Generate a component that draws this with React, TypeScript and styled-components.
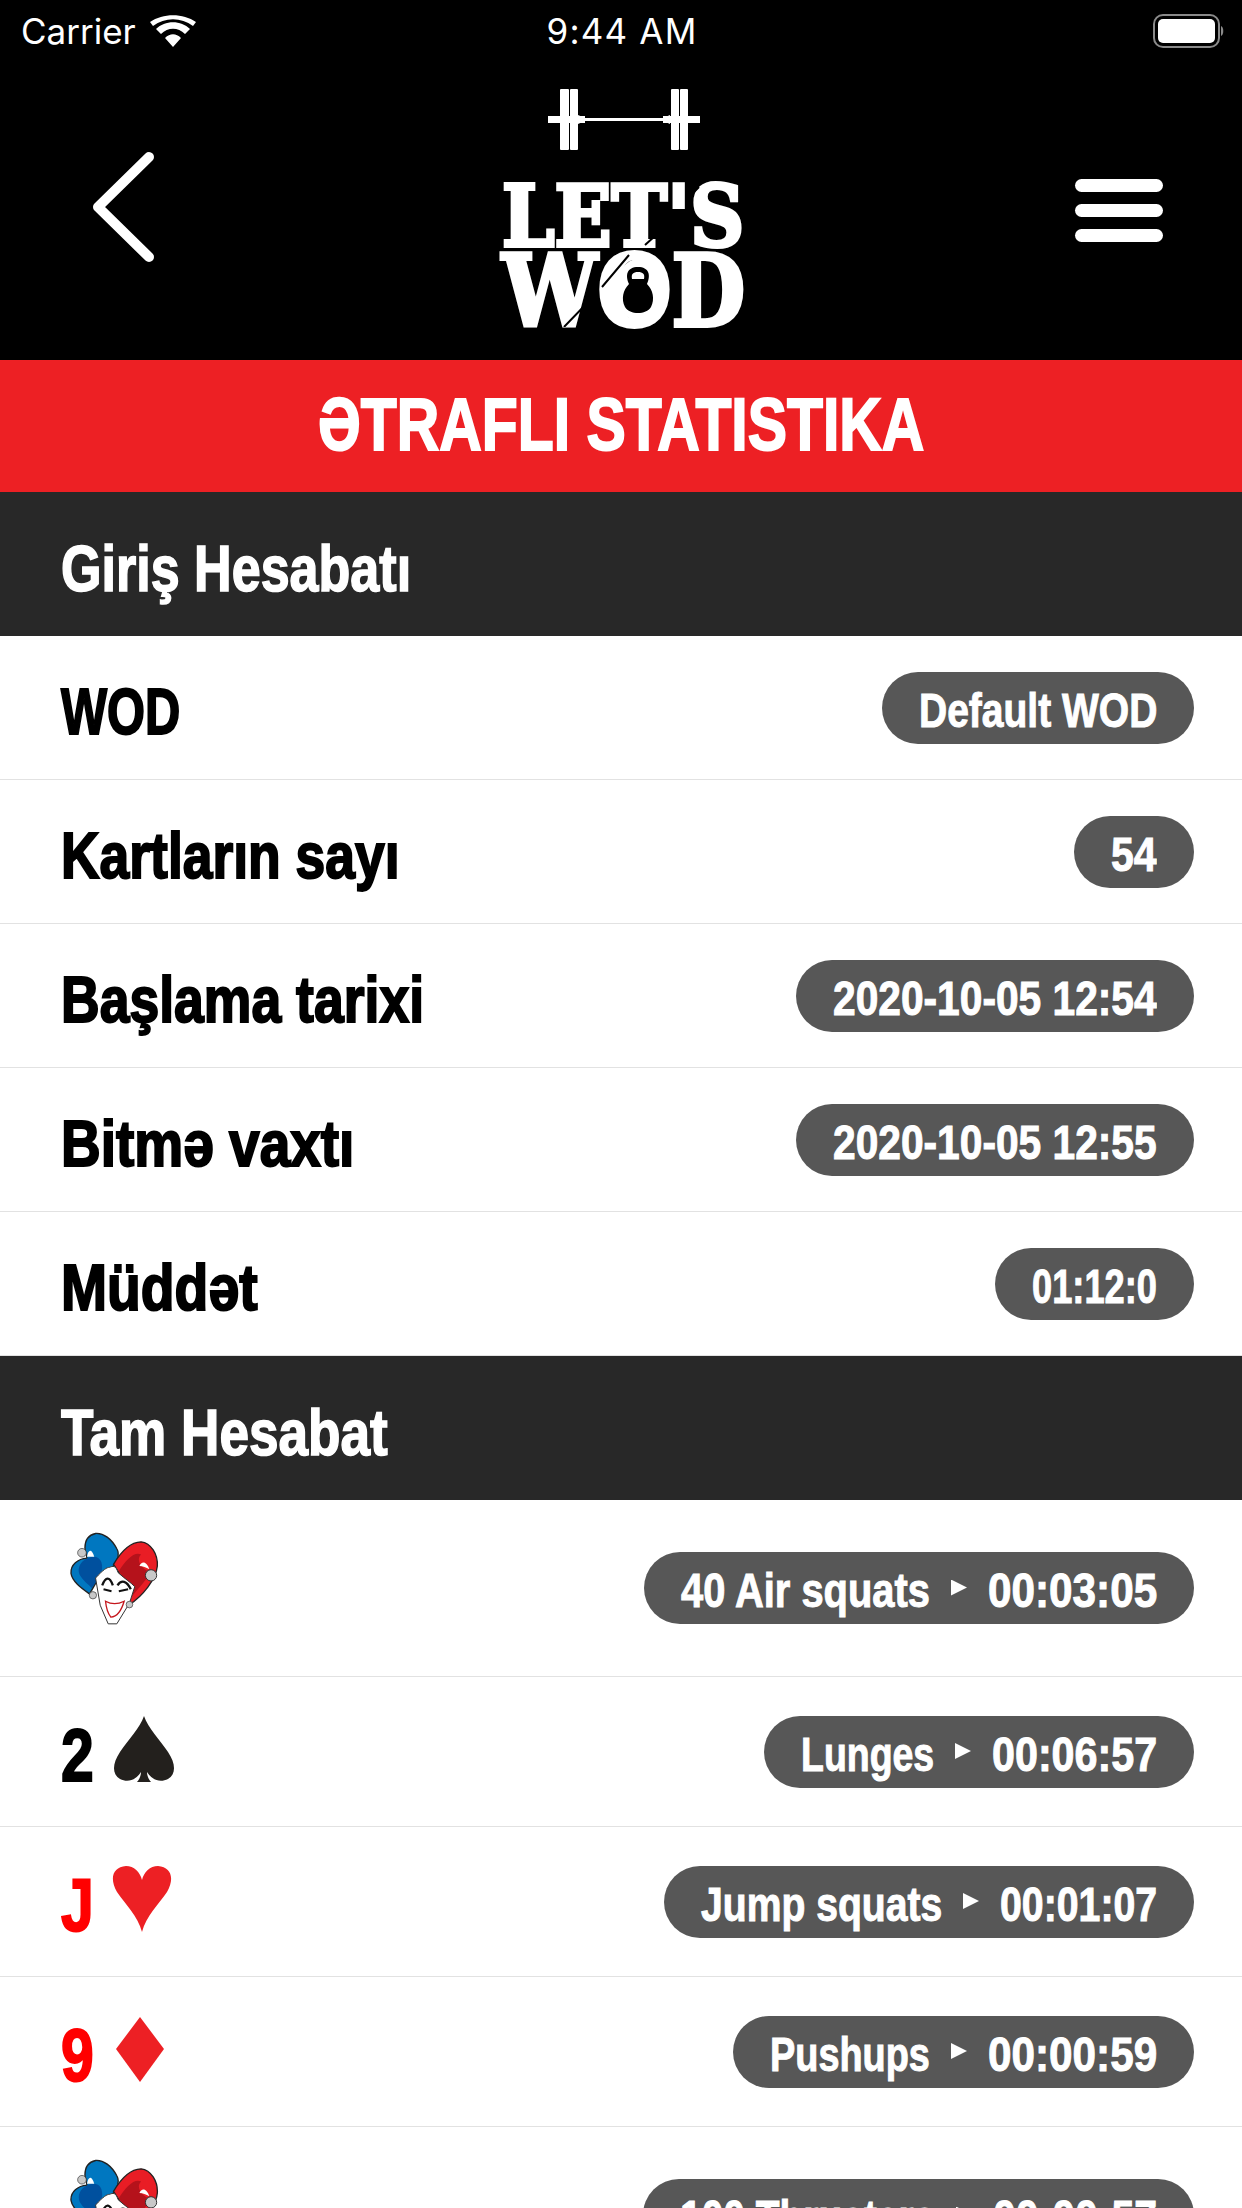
import * as React from 'react';
import styled, { createGlobalStyle } from 'styled-components';

const GlobalStyle = createGlobalStyle`
  html, body {
    margin: 0;
    padding: 0;
    background: #fff;
  }
  body {
    font-family: "Liberation Sans", Arial, sans-serif;
  }
`;

const Page = styled.div`
  width: 1242px;
  height: 2208px;
  overflow: hidden;
  background: #fff;
`;

const Header = styled.header`
  height: 360px;
  background: #000;
  color: #fff;
  display: flex;
  flex-direction: column;
`;

const StatusBar = styled.div`
  height: 62px;
  padding: 0 17px 0 21px;
  display: grid;
  grid-template-columns: 1fr auto 1fr;
  align-items: center;
  font-family: Inter, "Liberation Sans", sans-serif;
  font-size: 35px;
`;

const StatusLeft = styled.div`
  display: flex;
  align-items: center;
  gap: 14px;
`;

const StatusRight = styled.div`
  display: flex;
  justify-content: flex-end;
`;

const Clock = styled.span`
  letter-spacing: 1.2px;
  margin-right: 2px;
`;

const Nav = styled.div`
  flex: 1;
  display: grid;
  grid-template-columns: 1fr auto 1fr;
  align-items: start;
  padding: 0 79px 0 90px;
`;

const BackButton = styled.svg`
  width: 66px;
  height: 114px;
  margin-top: 88px;
`;

const Burger = styled.div`
  width: 88px;
  margin-top: 117px;
  justify-self: end;
  display: flex;
  flex-direction: column;
  gap: 12px;
`;

const BurgerBar = styled.span`
  height: 13px;
  border-radius: 7px;
  background: #fff;
`;

const Logo = styled.div`
  width: 244px;
  margin-top: 27px;
  margin-left: -6px;
  display: flex;
  flex-direction: column;
  align-items: center;
`;

const Lettering = styled.div`
  position: relative;
  width: 244px;
  margin-top: 34px;
  display: flex;
  flex-direction: column;
  gap: 8px;
`;

const LogoLine = styled.div<{ $size: number; $cap: number }>`
  position: relative;
  height: ${(p) => p.$cap}px;
  font-family: "DejaVu Serif", serif;
  font-weight: 700;
  font-size: ${(p) => p.$size}px;
  line-height: ${(p) => p.$cap}px;
  -webkit-text-stroke: 4px #fff;
`;

const Kettlebell = styled.svg`
  position: absolute;
  left: 113px;
  top: 4px;
  width: 46px;
  height: 62px;
`;

const Slashes = styled.svg`
  position: absolute;
  left: 0;
  top: 0;
  width: 244px;
  height: 142px;
`;

const TitleBar = styled.h1`
  margin: 0;
  height: 132px;
  box-sizing: border-box;
  padding-bottom: 5px;
  background: #ed2024;
  color: #fff;
  display: flex;
  align-items: center;
  justify-content: center;
  font-size: 75px;
  font-weight: 700;
  -webkit-text-stroke: 2px #fff;
`;

const SectionBar = styled.h2`
  margin: 0;
  height: 144px;
  box-sizing: border-box;
  padding: 8px 0 0 61px;
  background: #282828;
  color: #fff;
  display: flex;
  align-items: center;
  font-size: 65px;
  font-weight: 700;
  -webkit-text-stroke: 1.6px #fff;
`;

const Row = styled.div<{ $height: number }>`
  height: ${(p) => p.$height}px;
  box-sizing: border-box;
  padding: 0 48px 0 61px;
  border-bottom: 1px solid #e2e2e2;
  display: flex;
  align-items: center;
  justify-content: space-between;
`;

const Label = styled.span`
  padding-top: 8px;
  color: #000;
  font-size: 64px;
  font-weight: 700;
  -webkit-text-stroke: 2px #000;
`;

const Pill = styled.div`
  height: 72px;
  box-sizing: border-box;
  padding: 4px 37px 0;
  border-radius: 36px;
  background: #575757;
  color: #fff;
  display: flex;
  align-items: center;
  gap: 21px;
  font-size: 49px;
  font-weight: 700;
  -webkit-text-stroke: 1px #fff;
`;

const Arrow = styled.span`
  width: 16px;
  height: 16px;
  margin-bottom: 5px;
  background: #fff;
  clip-path: polygon(0 0, 100% 50%, 0 100%);
`;

const Card = styled.div`
  display: flex;
  align-items: center;
  gap: 18px;
`;

const CardRank = styled.span<{ $red: boolean }>`
  padding-top: 6px;
  color: ${(p) => (p.$red ? '#ff0000' : '#000')};
  font-size: 75px;
  font-weight: 700;
  -webkit-text-stroke: 2px ${(p) => (p.$red ? '#ff0000' : '#000')};
`;

const SuitIcon = styled.svg`
  width: 64px;
  height: 68px;
  margin-bottom: 4px;
`;

const JokerIcon = styled.svg`
  width: 93px;
  height: 95px;
  margin: 0 0 19px 7px;
`;

const FitBox = styled.span<{ $width: number }>`
  display: block;
  width: ${(p) => p.$width}px;
  white-space: nowrap;
`;

const FitInner = styled.span`
  display: inline-block;
  transform-origin: left center;
`;

// the reference font is far narrower than anything installed, so squeeze each text to its measured width
const FitText = ({ width, children }: { width: number; children: React.ReactNode }) => {
  const ref = React.useRef<HTMLSpanElement>(null);
  const [scale, setScale] = React.useState(1);
  React.useLayoutEffect(() => {
    if (ref.current) setScale(width / ref.current.offsetWidth);
  }, [width]);
  return (
    <FitBox $width={width}>
      <FitInner ref={ref} style={{ transform: `scaleX(${scale})` }}>
        {children}
      </FitInner>
    </FitBox>
  );
};

const Joker = () => (
  <JokerIcon viewBox="115 95 280 285">
    <path d="M240 215C262 190 272 165 262 148 246 118 222 100 198 102 178 106 166 122 166 146L172 176C145 178 122 196 124 222 128 248 158 268 180 284L205 240Z" fill="#0077c0" stroke="#222" strokeWidth="4" />
    <path d="M212 232C226 195 214 170 190 172 160 176 140 200 150 226 160 244 176 254 186 266Z" fill="#00509e" />
    <path d="M252 195C275 155 305 128 335 127 365 130 386 165 384 200 380 240 340 290 300 316L300 270Z" fill="#e91d25" stroke="#222" strokeWidth="4" />
    <path d="M268 215C290 180 315 155 335 165 315 185 345 215 365 218 345 250 320 275 305 295 300 270 285 240 268 215Z" fill="#b5121b" />
    <path d="M330 200C336 184 352 184 360 210 350 204 340 200 330 200Z" fill="#fff" />
    <path d="M172 172C176 150 186 146 194 172Z" fill="#fff" />
    <path d="M198 236C222 210 232 204 240 204 250 200 258 196 266 220 288 240 305 250 316 262L300 312 262 374H236L212 318Z" fill="#fff" stroke="#333" strokeWidth="3" />
    <path d="M218 258C228 232 240 230 250 258M264 258C276 240 292 244 304 270" fill="none" stroke="#111" strokeWidth="7" />
    <path d="M222 270L246 276M268 276L296 270" stroke="#111" strokeWidth="6" />
    <path d="M228 306C246 316 264 316 284 306 276 334 264 352 244 354 236 344 230 326 228 306Z" fill="#fff" stroke="#c4161c" strokeWidth="4" />
    <circle cx="157" cy="160" r="13" fill="#c8c8c8" stroke="#333" strokeWidth="2" />
    <circle cx="190" cy="288" r="11" fill="#c8c8c8" stroke="#333" strokeWidth="2" />
    <circle cx="365" cy="228" r="17" fill="#c8c8c8" stroke="#333" strokeWidth="3" />
    <circle cx="300" cy="316" r="10" fill="#c8c8c8" stroke="#333" strokeWidth="2" />
  </JokerIcon>
);

const suits: Record<string, { fill: string; d: string }> = {
  spade: {
    fill: '#23201d',
    d: 'M32 0C28 12 16 24 8 36 0 48 0 58 8 63 16 67 24 64 29 56 29 60 27 64 25 66H39C37 64 35 60 35 56 40 64 48 67 56 63 64 58 64 48 56 36 48 24 36 12 32 0Z',
  },
  heart: {
    fill: '#ed2024',
    d: 'M30 66C26 50 13 38 5 26 -3 12 1 1 14 0 22 0 28 6 30 14 32 6 38 0 46 0 59 1 63 12 55 26 47 38 34 50 30 66Z',
  },
  diamond: {
    fill: '#ed2024',
    d: 'M28 1L52 33 28 66 4 33Z',
  },
};

const Suit = ({ name }: { name: string }) => (
  <SuitIcon viewBox="0 0 64 68">
    <path d={suits[name].d} fill={suits[name].fill} />
  </SuitIcon>
);

const summary = [
  { label: 'WOD', labelWidth: 119, value: 'Default WOD', valueWidth: 238 },
  { label: 'Kartların sayı', labelWidth: 339, value: '54', valueWidth: 46 },
  { label: 'Başlama tarixi', labelWidth: 363, value: '2020-10-05 12:54', valueWidth: 324 },
  { label: 'Bitmə vaxtı', labelWidth: 293, value: '2020-10-05 12:55', valueWidth: 324 },
  { label: 'Müddət', labelWidth: 197, value: '01:12:0', valueWidth: 125 },
];

const rounds = [
  { rank: '', rankWidth: 0, suit: 'joker', name: '40 Air squats', nameWidth: 249, time: '00:03:05', timeWidth: 169, height: 177 },
  { rank: '2', rankWidth: 33, suit: 'spade', name: 'Lunges', nameWidth: 133, time: '00:06:57', timeWidth: 165, height: 150 },
  { rank: 'J', rankWidth: 33, suit: 'heart', name: 'Jump squats', nameWidth: 241, time: '00:01:07', timeWidth: 157, height: 150 },
  { rank: '9', rankWidth: 33, suit: 'diamond', name: 'Pushups', nameWidth: 160, time: '00:00:59', timeWidth: 169, height: 150 },
  { rank: '', rankWidth: 0, suit: 'joker', name: '100 Thrusters', nameWidth: 255, time: '00:00:57', timeWidth: 164, height: 177 },
];

export default function App() {
  return (
    <Page>
      <GlobalStyle />
      <Header>
        <StatusBar>
          <StatusLeft>
            Carrier
            <svg width="46" height="32" viewBox="0 0 46 32">
              <path d="M23 32L15 23C20 18 26 18 31 23ZM11 19L6 14C15 5 31 5 40 14L35 19C28 12 18 12 11 19ZM3 11L0 7C13 -2 33 -2 46 7L43 11C31 2 15 2 3 11Z" fill="#fff" />
            </svg>
          </StatusLeft>
          <Clock>9:44 AM</Clock>
          <StatusRight>
            <svg width="72" height="34" viewBox="0 0 72 34">
              <rect x="1" y="1" width="65" height="32" rx="9" fill="none" stroke="#8a8a8a" strokeWidth="2" />
              <rect x="5" y="5" width="57" height="24" rx="5" fill="#fff" />
              <path d="M68 12C71 13 71 21 68 22Z" fill="#8a8a8a" />
            </svg>
          </StatusRight>
        </StatusBar>
        <Nav>
          <BackButton viewBox="0 0 66 114">
            <path d="M59 7L8 57 59 107" fill="none" stroke="#fff" strokeWidth="10" strokeLinecap="round" strokeLinejoin="round" />
          </BackButton>
          <Logo>
            <svg width="152" height="62" viewBox="0 0 152 62">
              <g fill="#fff">
                <rect x="12" y="0" width="9" height="61" rx="1" />
                <rect x="22" y="0" width="8" height="61" rx="1" />
                <rect x="123" y="0" width="8" height="61" rx="1" />
                <rect x="132" y="0" width="8" height="61" rx="1" />
                <rect x="0" y="27" width="152" height="7" />
                <path d="M30 26L37 29H115L122 26V35L115 32H37L30 35Z" />
              </g>
              <rect x="37" y="27" width="78" height="2" fill="#000" />
              <rect x="37" y="32" width="78" height="2" fill="#000" />
            </svg>
            <Lettering>
              <LogoLine $size={85} $cap={62}>
                <FitText width={242}>LET'S</FitText>
              </LogoLine>
              <LogoLine $size={99} $cap={72}>
                <FitText width={243}>WOD</FitText>
                <Kettlebell viewBox="0 0 46 62">
                  <ellipse cx="23" cy="31" rx="22" ry="31" fill="#fff" />
                  <path d="M14 25C10 16 12 8 23 8 34 8 36 16 32 25 38 31 40 40 36 48 31 56 15 56 10 48 6 40 8 31 14 25ZM17 20H29C30 15 28 13 23 13 18 13 16 15 17 20Z" fillRule="evenodd" fill="#000" />
                </Kettlebell>
              </LogoLine>
              <Slashes viewBox="0 0 244 142">
                <path d="M127 70L100 102M90 113L62 142M153 51L143 60M197 2L188 11" stroke="#000" strokeWidth="2" />
              </Slashes>
            </Lettering>
          </Logo>
          <Burger>
            <BurgerBar />
            <BurgerBar />
            <BurgerBar />
          </Burger>
        </Nav>
      </Header>
      <TitleBar>
        <FitText width={606}>ƏTRAFLI STATISTIKA</FitText>
      </TitleBar>
      <SectionBar>
        <FitText width={350}>Giriş Hesabatı</FitText>
      </SectionBar>
      {summary.map((s) => (
        <Row key={s.label} $height={144}>
          <Label>
            <FitText width={s.labelWidth}>{s.label}</FitText>
          </Label>
          <Pill>
            <FitText width={s.valueWidth}>{s.value}</FitText>
          </Pill>
        </Row>
      ))}
      <SectionBar>
        <FitText width={327}>Tam Hesabat</FitText>
      </SectionBar>
      {rounds.map((r, i) => (
        <Row key={i} $height={r.height}>
          <Card>
            {r.rank && (
              <CardRank $red={r.suit === 'heart' || r.suit === 'diamond'}>
                <FitText width={r.rankWidth}>{r.rank}</FitText>
              </CardRank>
            )}
            {r.suit === 'joker' ? <Joker /> : <Suit name={r.suit} />}
          </Card>
          <Pill>
            <FitText width={r.nameWidth}>{r.name}</FitText>
            <Arrow />
            <FitText width={r.timeWidth}>{r.time}</FitText>
          </Pill>
        </Row>
      ))}
    </Page>
  );
}
